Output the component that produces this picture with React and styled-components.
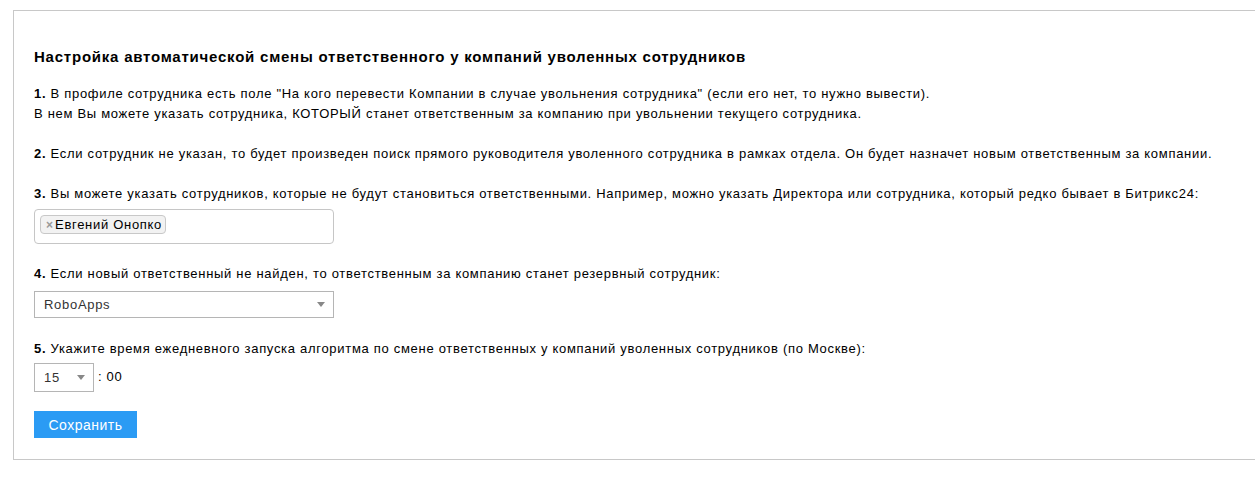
import React from "react";
import styled, { createGlobalStyle } from "styled-components";

const Global = createGlobalStyle`
  html, body { margin: 0; padding: 0; background: #fff; overflow: hidden; }
  body { font-family: "Liberation Sans", Arial, sans-serif; color: #000; letter-spacing: 0.7px; }
`;

const Panel = styled.div`
  margin: 10px -30px 0 13px;
  border: 1px solid #c8c8c8;
  border-right: none;
  padding: 36px 20px 21px 20px;
`;

const Title = styled.h2`
  margin: 0 0 17px 0;
  font-size: 15px;
  line-height: 20px;
  font-weight: bold;
  letter-spacing: 0.77px;
`;

const Para = styled.p`
  margin: 0 0 ${(p) => p.$gap ?? 20}px 0;
  font-size: 13px;
  line-height: 20px;
`;

const Num = styled.b`
  font-weight: bold;
`;

const MultiBox = styled.div`
  width: 300px;
  height: 35px;
  box-sizing: border-box;
  border: 1px solid #c6c6c6;
  border-radius: 4px;
  padding: 5px 5px;
  display: flex;
  align-items: flex-start;
  margin-bottom: 20px;
`;

const Tag = styled.span`
  display: inline-flex;
  align-items: center;
  height: 19px;
  box-sizing: border-box;
  border: 1px solid #c8c8c8;
  border-radius: 4px;
  background: #f2f2f2;
  padding: 0 3px 0 5px;
  font-size: 13px;
  color: #000;
`;

const TagX = styled.span`
  color: #999;
  font-size: 12px;
  font-weight: bold;
  margin-right: 2px;
  line-height: 1;
  letter-spacing: 0;
`;

const Select = styled.div`
  width: ${(p) => p.$w}px;
  height: ${(p) => p.$h}px;
  box-sizing: border-box;
  border: 1px solid #b5b5b5;
  display: flex;
  align-items: center;
  justify-content: space-between;
  padding: 0 8px 0 9px;
  font-size: 13px;
  color: #333;
`;

const Arrow = styled.span`
  width: 0;
  height: 0;
  border-left: 4px solid transparent;
  border-right: 4px solid transparent;
  border-top: 5px solid #888;
`;

const Block = styled.div`
  margin-bottom: ${(p) => p.$gap}px;
`;

const TimeRow = styled.div`
  display: flex;
  align-items: flex-start;
  gap: 4px;
  margin-bottom: 19px;
`;

const TimeSuffix = styled.span`
  font-size: 13px;
  line-height: 16px;
  padding-top: 6px;
`;

const Button = styled.button`
  display: block;
  width: 103px;
  height: 27px;
  border: none;
  background: #2b9bf4;
  color: #fff;
  font-family: "Liberation Sans", Arial, sans-serif;
  font-size: 14px;
  letter-spacing: 0.5px;
  padding: 0;
  cursor: pointer;
`;

export default function App() {
  return (
    <>
      <Global />
      <Panel>
        <Title>Настройка автоматической смены ответственного у компаний уволенных сотрудников</Title>
        <Para>
          <Num>1.</Num> В профиле сотрудника есть поле "На кого перевести Компании в случае увольнения сотрудника" (если его нет, то нужно вывести).
          <br />
          В нем Вы можете указать сотрудника, КОТОРЫЙ станет ответственным за компанию при увольнении текущего сотрудника.
        </Para>
        <Para>
          <Num>2.</Num> Если сотрудник не указан, то будет произведен поиск прямого руководителя уволенного сотрудника в рамках отдела. Он будет назначет новым ответственным за компании.
        </Para>
        <Para $gap={5}>
          <Num>3.</Num> Вы можете указать сотрудников, которые не будут становиться ответственными. Например, можно указать Директора или сотрудника, который редко бывает в Битрикс24:
        </Para>
        <MultiBox>
          <Tag>
            <TagX>×</TagX>Евгений Онопко
          </Tag>
        </MultiBox>
        <Para $gap={7}>
          <Num>4.</Num> Если новый ответственный не найден, то ответственным за компанию станет резервный сотрудник:
        </Para>
        <Block $gap={21}>
          <Select $w={300} $h={27}>
            RoboApps
            <Arrow />
          </Select>
        </Block>
        <Para $gap={4}>
          <Num>5.</Num> Укажите время ежедневного запуска алгоритма по смене ответственных у компаний уволенных сотрудников (по Москве):
        </Para>
        <TimeRow>
          <Select $w={60} $h={29}>
            15
            <Arrow />
          </Select>
          <TimeSuffix>: 00</TimeSuffix>
        </TimeRow>
        <Button>Сохранить</Button>
      </Panel>
    </>
  );
}
